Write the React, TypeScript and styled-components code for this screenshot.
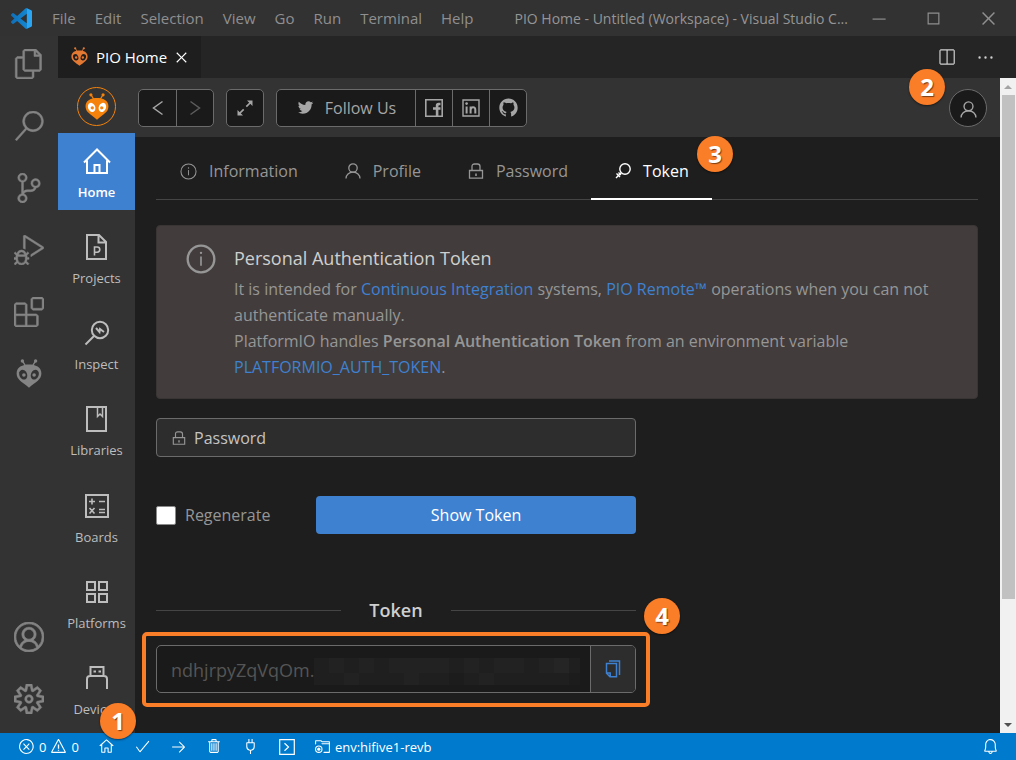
import React from "react";
import styled, { createGlobalStyle, css } from "styled-components";
import {
  VscAccount,
  VscArrowRight,
  VscBell,
  VscCheck,
  VscChromeClose,
  VscChromeMaximize,
  VscChromeMinimize,
  VscClose,
  VscDebugAlt,
  VscEllipsis,
  VscError,
  VscExtensions,
  VscFiles,
  VscHome,
  VscPlug,
  VscRootFolder,
  VscSearch,
  VscSettingsGear,
  VscSourceControl,
  VscSplitHorizontal,
  VscTrash,
  VscWarning,
} from "react-icons/vsc";
import { AiFillGithub, AiOutlineTwitter } from "react-icons/ai";

const GlobalStyle = createGlobalStyle`
  * { box-sizing: border-box; }
  body {
    margin: 0;
    background: #1e1e1e;
    color: #969696;
    font-family: "Open Sans", "Noto Sans", sans-serif;
    font-size: 16px;
  }
  button, input { font: inherit; }
  button { cursor: pointer; }
  svg { display: block; flex: none; }
`;

const plainButton = css`
  display: flex;
  align-items: center;
  justify-content: center;
  padding: 0;
  border: 0;
  background: none;
  color: inherit;
`;

/* ---------- window frame ---------- */

const Window = styled.div`
  display: flex;
  flex-direction: column;
  height: 100vh;
  overflow: hidden;
`;

const TitleBar = styled.header`
  display: flex;
  align-items: center;
  flex: none;
  height: 36px;
  padding-left: 11px;
  background: #323233;
  color: #8f8f8f;
`;

const MenuBar = styled.nav`
  display: flex;
  margin-left: 10px;
`;

const MenuItem = styled.button`
  ${plainButton}
  padding: 0 9px 0 10px;
  font-size: 15px;
  line-height: 36px;
`;

const WindowTitle = styled.div`
  flex: 1;
  margin-left: 32px;
  overflow: hidden;
  font-size: 14px;
  white-space: nowrap;
  color: #959595;
`;

const WindowButton = styled.button`
  ${plainButton}
  width: 55px;
  height: 36px;
`;

const Workbench = styled.div`
  display: flex;
  flex: 1;
  min-height: 0;
`;

const ActivityBar = styled.nav`
  display: flex;
  flex-direction: column;
  flex: none;
  width: 58px;
  background: #333333;
  color: #848484;
`;

const ActivityButton = styled.button<{ $pushDown?: boolean }>`
  ${plainButton}
  width: 58px;
  height: 62px;
  padding-bottom: 6px;
  margin-top: ${(p) => (p.$pushDown ? "auto" : 0)};

  svg {
    stroke-width: 0.4px;
  }
`;

const Editor = styled.div`
  display: flex;
  flex-direction: column;
  flex: 1;
  min-width: 0;
`;

const TabStrip = styled.div`
  display: flex;
  align-items: center;
  flex: none;
  height: 42px;
  padding-right: 21px;
  background: #252526;
  color: #d0d0d0;
`;

const EditorTab = styled.div`
  display: flex;
  align-items: center;
  width: 143px;
  height: 42px;
  padding-left: 13px;
  background: #1e1e1e;
  color: #ffffff;
  font-size: 15px;
  white-space: nowrap;
`;

const TabLabel = styled.span`
  flex: 1;
  margin-left: 8px;
`;

const TabClose = styled.button`
  ${plainButton}
  margin-right: 10px;
`;

const TabActions = styled.div`
  display: flex;
  gap: 20px;
  margin-left: auto;
`;

const TabAction = styled.button`
  ${plainButton}
`;

/* ---------- PIO Home ---------- */

const PioHome = styled.div`
  display: flex;
  flex: 1;
  min-height: 0;
`;

const Side = styled.aside`
  display: flex;
  flex-direction: column;
  flex: none;
  width: 77px;
  background: #333333;
`;

const LogoRing = styled.div`
  display: flex;
  align-items: center;
  justify-content: center;
  width: 39px;
  height: 39px;
  margin: 9px auto 7px;
  border: 1px solid #f5820b;
  border-radius: 50%;
`;

const SideNav = styled.nav`
  display: flex;
  flex: 1;
  flex-direction: column;
  justify-content: space-between;
  padding-bottom: 6px;
`;

const SideLink = styled.a<{ $active?: boolean }>`
  position: relative;
  display: flex;
  flex-direction: column;
  align-items: center;
  gap: 5px;
  height: 77px;
  padding-top: 12px;
  background: ${(p) => (p.$active ? "#3f81d1" : "transparent")};
  color: ${(p) => (p.$active ? "#ffffff" : "#bdbdbd")};
  font-size: 13px;
  font-weight: ${(p) => (p.$active ? 600 : 400)};
  line-height: 20px;
  text-decoration: none;
`;

const Main = styled.main`
  display: flex;
  flex: 1;
  flex-direction: column;
  min-width: 0;
`;

const Toolbar = styled.div`
  display: flex;
  align-items: center;
  flex: none;
  gap: 12px;
  height: 59px;
  padding: 0 13px 0 3px;
  background: #333333;
`;

const ButtonGroup = styled.div`
  display: flex;
  height: 38px;
  overflow: hidden;
  border: 1px solid #6b6b6b;
  border-radius: 5px;
  background: #1a1a1a;
`;

const toolWidths = { wide: 138, normal: 37, narrow: 36 };

const ToolButton = styled.button<{ $size?: keyof typeof toolWidths; $dim?: boolean }>`
  ${plainButton}
  gap: 10px;
  width: ${(p) => toolWidths[p.$size ?? "normal"]}px;
  color: ${(p) => (p.$dim ? "#5c5c5c" : "#a6a6a6")};

  & + & {
    border-left: 1px solid #6b6b6b;
  }
`;

const AvatarSlot = styled.div`
  position: relative;
  margin-left: auto;
`;

const Avatar = styled.button`
  ${plainButton}
  width: 38px;
  height: 38px;
  padding-top: 4px;
  border: 1px solid #6b6b6b;
  border-radius: 50%;
  background: #1a1a1a;
  color: #a6a6a6;
`;

const Content = styled.div`
  flex: 1;
  min-height: 0;
  padding: 0 22px 0 21px;
`;

const Tabs = styled.div`
  display: flex;
  height: 63px;
  margin-bottom: 25px;
  border-bottom: 1px solid #454545;
`;

const Tab = styled.button<{ $active?: boolean }>`
  ${plainButton}
  position: relative;
  gap: 12px;
  height: 63px;
  padding: 7px 23px 0 24px;
  border-bottom: 2px solid ${(p) => (p.$active ? "#ffffff" : "transparent")};
  color: ${(p) => (p.$active ? "#ffffff" : "#969696")};
  font-weight: ${(p) => (p.$active ? 500 : 400)};
`;

const Notice = styled.section`
  display: flex;
  gap: 18px;
  padding: 18px 29px;
  border: 1px solid #393534;
  border-radius: 4px;
  background: #423d3c;
`;

const NoticeTitle = styled.h2`
  margin: 1px 0 5px;
  color: #cfcfcf;
  font-size: 18px;
  font-weight: 400;
  line-height: 26px;
`;

const NoticeText = styled.p`
  margin: 0;
  line-height: 26px;
`;

const Strong = styled.strong`
  font-weight: 600;
`;

const Link = styled.a`
  color: #3f81d1;
  text-decoration: none;
`;

const Form = styled.form`
  width: 480px;
  max-width: 100%;
  margin-top: 19px;
`;

const PasswordField = styled.label`
  display: flex;
  align-items: center;
  gap: 8px;
  height: 39px;
  padding-left: 15px;
  border: 1px solid #6b6b6b;
  border-radius: 4px;
  background: #2d2d2d;
`;

const PasswordInput = styled.input`
  flex: 1;
  min-width: 0;
  padding: 0;
  border: 0;
  outline: 0;
  background: none;
  color: #cccccc;

  &::placeholder {
    color: #c4c4c4;
    opacity: 1;
  }
`;

const SubmitRow = styled.div`
  display: grid;
  grid-template-columns: 1fr 2fr;
  align-items: center;
  margin: 39px 0 63px;
`;

const CheckLabel = styled.label`
  display: flex;
  align-items: center;
  gap: 9px;
`;

const Checkbox = styled.input`
  width: 20px;
  height: 19px;
  margin: 0;
  border: 1px solid #8a8a8a;
  border-radius: 2px;
  background: #ffffff;
  appearance: none;
`;

const SubmitButton = styled.button`
  height: 38px;
  padding: 0;
  border: 0;
  border-radius: 4px;
  background: #3f81d1;
  color: #ffffff;
`;

const Divider = styled.h3`
  display: flex;
  align-items: center;
  gap: 28px;
  margin: 0 0 21px;
  color: #cfcfcf;
  font-size: 18px;
  font-weight: 600;
  line-height: 27px;

  &::before,
  &::after {
    flex: 1;
    height: 1px;
    background: #454545;
    content: "";
  }
`;

const TokenRow = styled.div`
  position: relative;
  display: flex;
  height: 48px;
  border: 1px solid #6b6b6b;
  border-radius: 5px;
  background: #1a1a1a;
`;

const TokenInput = styled.input`
  flex: 1;
  min-width: 0;
  padding: 2px 14px 0;
  border: 0;
  outline: 0;
  background: none;
  color: #555555;
  font-size: 18px;
`;

const CopyButton = styled.button`
  ${plainButton}
  width: 45px;
  border-left: 1px solid #6b6b6b;
  border-radius: 0 4px 4px 0;
  background: #2d2d2d;
  color: #3f81d1;
`;

const Mosaic = styled.div`
  position: absolute;
  top: 12px;
  left: 157px;
  display: grid;
  grid-template-columns: repeat(17, 15px) 11px;
  grid-template-rows: 15px 12px;
`;

const MosaicCell = styled.span<{ $shade: number }>`
  background: ${(p) => ["#1c1c1c", "#1f1f1f", "#222222", "#252525"][p.$shade]};
`;

const Highlight = styled.div`
  position: absolute;
  inset: -14px -15px -15px;
  border: 4px solid #fa7d28;
  border-radius: 5px;
  pointer-events: none;
`;

const Badge = styled.span<{ $top: number; $left: number }>`
  position: absolute;
  top: ${(p) => p.$top}px;
  left: ${(p) => p.$left}px;
  z-index: 2;
  display: flex;
  align-items: center;
  justify-content: center;
  width: 36px;
  height: 36px;
  border-radius: 50%;
  background: #fa7d28;
  box-shadow: 0 1px 2px rgba(0, 0, 0, 0.5);
  color: #ffffff;
  font-size: 24px;
  font-weight: 700;
  line-height: 36px;
  text-shadow: 1px 1px 1px rgba(0, 0, 0, 0.5);
`;

const ScrollTrack = styled.div`
  display: flex;
  flex-direction: column;
  align-items: center;
  flex: none;
  width: 16px;
  background: #f1f1f1;
`;

const ScrollArrow = styled.div<{ $down?: boolean }>`
  display: flex;
  align-items: center;
  height: 17px;
  margin-top: ${(p) => (p.$down ? "auto" : 0)};
  color: ${(p) => (p.$down ? "#505050" : "#a3a3a3")};
`;

const ScrollThumb = styled.div`
  flex: 0 0 77%;
  width: 13px;
  background: #c1c1c1;
`;

const StatusBar = styled.footer`
  display: flex;
  align-items: center;
  flex: none;
  height: 27px;
  padding: 0 17px 0 18px;
  background: #007acc;
  color: #ffffff;
  font-size: 13px;
`;

const StatusItem = styled.button<{ $icon?: boolean }>`
  ${plainButton}
  gap: 4px;
  width: ${(p) => (p.$icon ? "36px" : "auto")};
  white-space: nowrap;
`;

const StatusGroup = styled.div`
  display: flex;
  margin: 0 auto 0 10px;
`;

const EnvironmentItem = styled(StatusItem)`
  margin-left: 9px;
`;

/* ---------- drawings ---------- */

const stroke = (w = 2) => ({ fill: "none", stroke: "currentColor", strokeWidth: w });

function VsCodeLogo() {
  return (
    <svg width="21" height="21" viewBox="0 0 24 24">
      <defs>
        <linearGradient id="vsc" x1="0" x2="1" y1="0" y2="0">
          <stop offset="0" stopColor="#0f6fb8" />
          <stop offset="0.74" stopColor="#1486d0" />
          <stop offset="0.75" stopColor="#2aa5f4" />
          <stop offset="1" stopColor="#2aa5f4" />
        </linearGradient>
      </defs>
      <path
        fill="url(#vsc)"
        d="M23.15 2.587L18.21.21a1.494 1.494 0 0 0-1.705.29l-9.46 8.63-4.12-3.128a.999.999 0 0 0-1.276.057L.327 7.261A1 1 0 0 0 .326 8.74L3.899 12 .326 15.26a1 1 0 0 0 .001 1.479L1.65 17.94a.999.999 0 0 0 1.276.057l4.12-3.128 9.46 8.63a1.492 1.492 0 0 0 1.704.29l4.942-2.377A1.5 1.5 0 0 0 24 20.06V3.939a1.5 1.5 0 0 0-.85-1.352zm-5.146 14.861L10.826 12l7.178-5.448v10.896z"
      />
    </svg>
  );
}

function PioHead({ size, color, eyes }: { size: number; color: string; eyes: string }) {
  return (
    <svg width={size} height={size * 1.12} viewBox="0 0 26 29">
      <path d="M6.6 2 9.6 7M19.4 2 16.4 7" fill="none" stroke={color} strokeWidth="1.3" />
      <circle cx="6.4" cy="1.9" r="1.7" fill={color} />
      <circle cx="19.6" cy="1.9" r="1.7" fill={color} />
      <path
        fill={color}
        d="M13 5.4C19.5 5.4 25.4 8 25.4 14.3C25.4 21 20 22.5 13 28.8C6 22.5 .6 21 .6 14.3C.6 8 6.5 5.4 13 5.4Z"
      />
      <ellipse cx="7.2" cy="15.6" rx="3.9" ry="5.1" fill={eyes} transform="rotate(-22 7.2 15.6)" />
      <ellipse cx="18.8" cy="15.6" rx="3.9" ry="5.1" fill={eyes} transform="rotate(22 18.8 15.6)" />
      <circle cx="7.9" cy="16" r="1.8" fill={color} />
      <circle cx="18.1" cy="16" r="1.8" fill={color} />
    </svg>
  );
}

function HomeGlyph() {
  return (
    <svg width="32" height="32" viewBox="0 0 32 32" {...stroke()}>
      <path d="M3 17.5 16 4.500 29 17.5M6 15.5V28H26V15.5M13.5 28V20H18.5V28" />
    </svg>
  );
}

function ProjectsGlyph() {
  return (
    <svg width="32" height="32" viewBox="0 0 32 32" {...stroke()}>
      <path d="M6 4H18L25 11V28H6ZM17.5 4V11.5H25" />
      <path d="M13.5 24.5V16H16.2A2.6 2.6 0 0 1 16.2 21.2H13.5" strokeWidth="1.6" />
    </svg>
  );
}

function InspectGlyph() {
  return (
    <svg width="32" height="32" viewBox="0 0 32 32" {...stroke()}>
      <circle cx="19" cy="13" r="8.2" />
      <path d="M13 19 4.500 27.5" />
      <path d="M15 11 18.5 15 19 12 23 15" />
    </svg>
  );
}

function LibrariesGlyph() {
  return (
    <svg width="32" height="32" viewBox="0 0 32 32" {...stroke()}>
      <path d="M6 4H25V28H6Z" />
      <path d="M16.5 4V13.5L19 11 21.5 13.5V4" strokeWidth="1.5" />
    </svg>
  );
}

function BoardsGlyph() {
  return (
    <svg width="32" height="32" viewBox="0 0 32 32" {...stroke()}>
      <path d="M5 5H27V27H5Z" />
      <path
        d="M8 11.5H14M11 8.5V14.5M18 11.5H24M8.5 18 13.5 23.5M13.5 18 8.5 23.5M18 19.5H24M18 22.5H24"
        strokeWidth="1.6"
      />
    </svg>
  );
}

function PlatformsGlyph() {
  return (
    <svg width="32" height="32" viewBox="0 0 32 32" {...stroke()}>
      <path d="M6 6H14V14H6ZM18 6H26V14H18ZM6 18H14V26H6ZM18 18H26V26H18Z" />
    </svg>
  );
}

function DevicesGlyph() {
  return (
    <svg width="32" height="32" viewBox="0 0 32 32" {...stroke()}>
      <path d="M9.5 14V5H22.5V14M6 27V17Q6 14 9 14H23Q26 14 26 17V27" />
      <path d="M12.5 9.5H15M17.5 9.5H20" />
    </svg>
  );
}

function InfoGlyph({ size, weight = 1.1 }: { size: number; weight?: number }) {
  return (
    <svg width={size} height={size} viewBox="0 0 18 18" {...stroke(weight)}>
      <circle cx="9" cy="9" r="8" />
      <path d="M9 7.5V13" strokeWidth="1" />
      <circle cx="9" cy="5.3" r=".7" fill="currentColor" stroke="none" />
    </svg>
  );
}

function UserGlyph({ size = 16, weight = 1.3 }: { size?: number; weight?: number }) {
  return (
    <svg width={size} height={size} viewBox="0 0 16 16" {...stroke(weight)}>
      <circle cx="8" cy="5" r="4.2" />
      <path d="M1 15.5C1 11.8 4 9.2 8 9.2S15 11.8 15 15.5" />
    </svg>
  );
}

function LockGlyph({ size = 16 }: { size?: number }) {
  return (
    <svg width={size} height={size} viewBox="0 0 16 16" {...stroke(1.3)}>
      <path d="M1.5 7.5H14.5V15.2H1.5ZM4 7.5V3.5Q4 1 6.5 1H9.5Q12 1 12 3.5V7.5" />
      <path d="M8 10.5V13" strokeWidth="1.6" />
    </svg>
  );
}

function KeyGlyph() {
  return (
    <svg width="16" height="16" viewBox="0 0 16 16" {...stroke(1.4)}>
      <circle cx="10" cy="6" r="5.2" />
      <path d="M6.2 9.8 1 15M1.5 10.5 5 14M3.5 9.5 6 12" />
    </svg>
  );
}

function ChevronGlyph({ right }: { right?: boolean }) {
  return (
    <svg width="12" height="16" viewBox="0 0 12 16" {...stroke(1.5)}>
      <path d={right ? "M1.5 1.5 10.5 8 1.5 14.5" : "M10.5 1.5 1.5 8 10.5 14.5"} />
    </svg>
  );
}

function ExpandGlyph() {
  return (
    <svg width="16" height="16" viewBox="0 0 16 16">
      <path d="M15.5 .5V6L10 .5ZM.5 15.5V10L6 15.5Z" fill="currentColor" />
      <path d="M13.5 2.5 9.3 6.7M6.7 9.3 2.5 13.5" {...stroke(1.7)} />
    </svg>
  );
}

function FacebookGlyph() {
  return (
    <svg width="18" height="18" viewBox="0 0 18 18">
      <path d="M.8 .8H17.2V17.2H.8Z" {...stroke(1.6)} />
      <path
        d="M10.8 17V10.8H8V8.2H10.8V6.5Q10.8 3.8 13.5 3.8H15.5V6.2H14.2Q13.4 6.2 13.4 7.2V8.2H15.5V10.8H13.4V17Z"
        fill="currentColor"
      />
    </svg>
  );
}

function LinkedinGlyph() {
  return (
    <svg width="18" height="18" viewBox="0 0 18 18">
      <path d="M1 1H17V17H1Z" {...stroke(1.4)} />
      <path d="M4.6 7.5V14.5M8.6 7.5V14.5M8.6 11Q8.6 8.3 11 8.3T13.3 11V14.5" {...stroke(2)} />
      <circle cx="4.6" cy="4.6" r="1.3" fill="currentColor" />
    </svg>
  );
}

function CopyGlyph() {
  return (
    <svg width="16" height="18" viewBox="0 0 16 18" {...stroke(1.5)}>
      <path d="M1.5 3.5H11.5V16.8H5L1.5 13.3ZM1.5 13H5.2V16.8M4 1H14.5V15" />
    </svg>
  );
}

function PromptGlyph() {
  return (
    <svg width="16" height="16" viewBox="0 0 16 16" {...stroke(1.2)}>
      <path d="M.7 .7H15.3V15.3H.7ZM5.5 4.200 9.5 8 5.5 11.8" />
    </svg>
  );
}

function Triangle({ down }: { down?: boolean }) {
  return (
    <svg width="8" height="4" viewBox="0 0 8 4">
      <path d={down ? "M0 0H8L4 4Z" : "M0 4H8L4 0Z"} fill="currentColor" />
    </svg>
  );
}

/* ---------- data ---------- */

const menus = ["File", "Edit", "Selection", "View", "Go", "Run", "Terminal", "Help"];

const activities = [
  { name: "Explorer", icon: <VscFiles size={30} /> },
  { name: "Search", icon: <VscSearch size={30} /> },
  { name: "Source Control", icon: <VscSourceControl size={30} /> },
  { name: "Run and Debug", icon: <VscDebugAlt size={30} /> },
  { name: "Extensions", icon: <VscExtensions size={30} /> },
  { name: "PlatformIO", icon: <PioHead size={26} color="#848484" eyes="#333333" /> },
];

const sections = [
  { name: "Home", icon: <HomeGlyph /> },
  { name: "Projects", icon: <ProjectsGlyph /> },
  { name: "Inspect", icon: <InspectGlyph /> },
  { name: "Libraries", icon: <LibrariesGlyph /> },
  { name: "Boards", icon: <BoardsGlyph /> },
  { name: "Platforms", icon: <PlatformsGlyph /> },
  { name: "Devices", icon: <DevicesGlyph /> },
];

const accountTabs = [
  { name: "Information", icon: <InfoGlyph size={17} /> },
  { name: "Profile", icon: <UserGlyph /> },
  { name: "Password", icon: <LockGlyph /> },
  { name: "Token", icon: <KeyGlyph /> },
];

const tasks = [
  { name: "PlatformIO: Home", icon: <VscHome size={17} /> },
  { name: "PlatformIO: Build", icon: <VscCheck size={17} /> },
  { name: "PlatformIO: Upload", icon: <VscArrowRight size={17} /> },
  { name: "PlatformIO: Clean", icon: <VscTrash size={17} /> },
  { name: "PlatformIO: Serial Monitor", icon: <VscPlug size={17} /> },
  { name: "PlatformIO: New Terminal", icon: <PromptGlyph /> },
];

const mosaicShades = "121212222121221231" + "112111211012111110";

export default function App() {
  return (
    <>
      <GlobalStyle />
      <Window>
        <TitleBar>
          <VsCodeLogo />
          <MenuBar>
            {menus.map((m) => (
              <MenuItem key={m}>{m}</MenuItem>
            ))}
          </MenuBar>
          <WindowTitle>PIO Home - Untitled (Workspace) - Visual Studio C...</WindowTitle>
          <WindowButton aria-label="Minimize"><VscChromeMinimize size={19} /></WindowButton>
          <WindowButton aria-label="Maximize"><VscChromeMaximize size={19} /></WindowButton>
          <WindowButton aria-label="Close"><VscChromeClose size={19} /></WindowButton>
        </TitleBar>

        <Workbench>
          <ActivityBar>
            {activities.map((a) => (
              <ActivityButton key={a.name} aria-label={a.name}>{a.icon}</ActivityButton>
            ))}
            <ActivityButton $pushDown aria-label="Accounts"><VscAccount size={30} /></ActivityButton>
            <ActivityButton aria-label="Manage"><VscSettingsGear size={30} /></ActivityButton>
          </ActivityBar>

          <Editor>
            <TabStrip>
              <EditorTab>
                <PioHead size={17} color="#e37933" eyes="#1e1e1e" />
                <TabLabel>PIO Home</TabLabel>
                <TabClose aria-label="Close tab"><VscClose size={19} /></TabClose>
              </EditorTab>
              <TabActions>
                <TabAction aria-label="Split editor"><VscSplitHorizontal size={19} /></TabAction>
                <TabAction aria-label="More actions"><VscEllipsis size={19} /></TabAction>
              </TabActions>
            </TabStrip>

            <PioHome>
              <Side>
                <LogoRing><PioHead size={24} color="#f5820b" eyes="#ffffff" /></LogoRing>
                <SideNav>
                  {sections.map((s) => (
                    <SideLink key={s.name} href="#" $active={s.name === "Home"}>
                      {s.icon}
                      {s.name}
                      {s.name === "Devices" && <Badge $top={53} $left={42}>1</Badge>}
                    </SideLink>
                  ))}
                </SideNav>
              </Side>

              <Main>
                <Toolbar>
                  <ButtonGroup>
                    <ToolButton aria-label="Back"><ChevronGlyph /></ToolButton>
                    <ToolButton aria-label="Forward" $dim><ChevronGlyph right /></ToolButton>
                  </ButtonGroup>
                  <ButtonGroup>
                    <ToolButton aria-label="Full screen" $size="narrow"><ExpandGlyph /></ToolButton>
                  </ButtonGroup>
                  <ButtonGroup>
                    <ToolButton $size="wide"><AiOutlineTwitter size={19} />Follow Us</ToolButton>
                    <ToolButton aria-label="Facebook"><FacebookGlyph /></ToolButton>
                    <ToolButton aria-label="LinkedIn"><LinkedinGlyph /></ToolButton>
                    <ToolButton aria-label="GitHub"><AiFillGithub size={21} /></ToolButton>
                  </ButtonGroup>
                  <AvatarSlot>
                    <Avatar aria-label="Account"><UserGlyph size={17} /></Avatar>
                    <Badge $top={-20} $left={-40}>2</Badge>
                  </AvatarSlot>
                </Toolbar>

                <Content>
                  <Tabs>
                    {accountTabs.map((t) => (
                      <Tab key={t.name} $active={t.name === "Token"}>
                        {t.icon}
                        {t.name}
                        {t.name === "Token" && <Badge $top={-1} $left={106}>3</Badge>}
                      </Tab>
                    ))}
                  </Tabs>

                  <Notice>
                    <InfoGlyph size={30} weight={1.4} />
                    <div>
                      <NoticeTitle>Personal Authentication Token</NoticeTitle>
                      <NoticeText>
                        It is intended for <Link href="#">Continuous Integration</Link> systems,{" "}
                        <Link href="#">PIO Remote™</Link> operations when you can not authenticate manually.
                      </NoticeText>
                      <NoticeText>
                        PlatformIO handles <Strong>Personal Authentication Token</Strong> from an environment variable{" "}
                        <Link href="#">PLATFORMIO_AUTH_TOKEN</Link>.
                      </NoticeText>
                    </div>
                  </Notice>

                  <Form onSubmit={(e) => e.preventDefault()}>
                    <PasswordField>
                      <LockGlyph size={14} />
                      <PasswordInput type="password" placeholder="Password" aria-label="Password" />
                    </PasswordField>
                    <SubmitRow>
                      <CheckLabel>
                        <Checkbox type="checkbox" />
                        Regenerate
                      </CheckLabel>
                      <SubmitButton>Show Token</SubmitButton>
                    </SubmitRow>
                    <Divider>Token</Divider>
                    <TokenRow>
                      <TokenInput readOnly aria-label="Token" value="ndhjrpyZqVqOm." />
                      <CopyButton type="button" aria-label="Copy token"><CopyGlyph /></CopyButton>
                      <Mosaic>
                        {mosaicShades.split("").map((s, i) => (
                          <MosaicCell key={i} $shade={Number(s)} />
                        ))}
                      </Mosaic>
                      <Highlight />
                      <Badge $top={-48} $left={487}>4</Badge>
                    </TokenRow>
                  </Form>
                </Content>
              </Main>

              <ScrollTrack>
                <ScrollArrow><Triangle /></ScrollArrow>
                <ScrollThumb />
                <ScrollArrow $down><Triangle down /></ScrollArrow>
              </ScrollTrack>
            </PioHome>
          </Editor>
        </Workbench>

        <StatusBar>
          <StatusItem>
            <VscError size={17} />0<VscWarning size={17} />0
          </StatusItem>
          <StatusGroup>
            {tasks.map((t) => (
              <StatusItem key={t.name} $icon aria-label={t.name}>{t.icon}</StatusItem>
            ))}
            <EnvironmentItem><VscRootFolder size={17} />env:hifive1-revb</EnvironmentItem>
          </StatusGroup>
          <StatusItem aria-label="Notifications"><VscBell size={17} /></StatusItem>
        </StatusBar>
      </Window>
    </>
  );
}
